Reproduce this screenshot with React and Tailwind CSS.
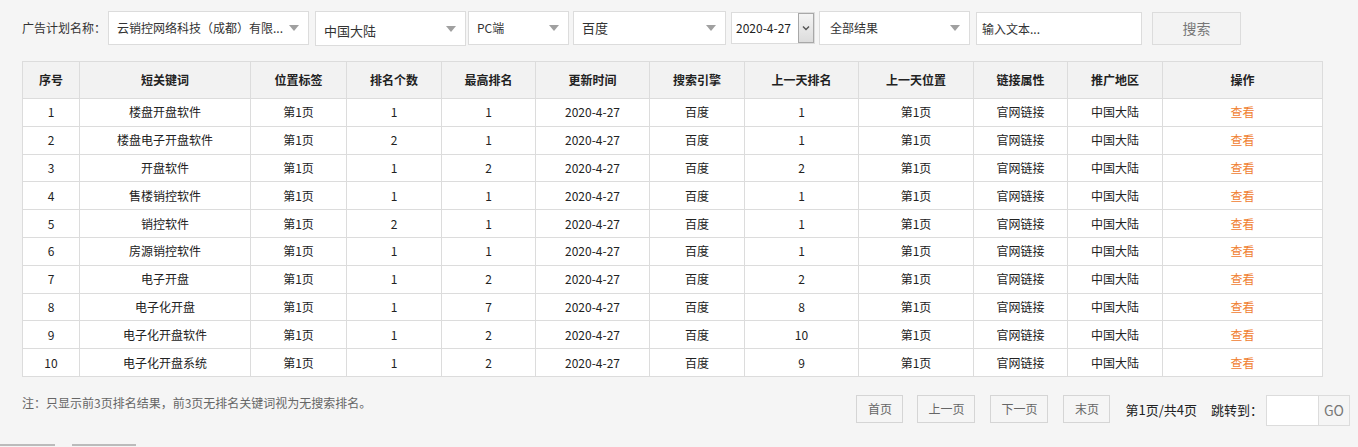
import React from "react";

const rows = [
  [1, "楼盘开盘软件", 1, 1, 1],
  [2, "楼盘电子开盘软件", 2, 1, 1],
  [3, "开盘软件", 1, 2, 2],
  [4, "售楼销控软件", 1, 1, 1],
  [5, "销控软件", 2, 1, 1],
  [6, "房源销控软件", 1, 1, 1],
  [7, "电子开盘", 1, 2, 2],
  [8, "电子化开盘", 1, 7, 8],
  [9, "电子化开盘软件", 1, 2, 10],
  [10, "电子化开盘系统", 1, 2, 9],
];

const heads = ["序号", "短关键词", "位置标签", "排名个数", "最高排名", "更新时间", "搜索引擎", "上一天排名", "上一天位置", "链接属性", "推广地区", "操作"];
const widths = [57, 171, 96, 95, 94, 114, 95, 114, 115, 94, 95, 160];

function Caret() {
  return (
    <svg width="10" height="6" viewBox="0 0 10 6" className="shrink-0">
      <path d="M0 0h10L5 6z" fill="#a0a0a0" />
    </svg>
  );
}

function Select({ text, className, textClass = "" }) {
  return (
    <div className={`h-[34px] bg-white border border-[#dcdcdc] flex items-center justify-between pl-2 pr-[9px] ${className}`}>
      <span className={`truncate text-[12px] text-[#333] ${textClass}`}>{text}</span>
      <Caret />
    </div>
  );
}

function PageBtn({ children, className = "" }) {
  return (
    <button className={`h-[28px] border border-[#d5d5d5] bg-[#f5f5f5] text-[12px] text-[#666] ${className}`}>
      {children}
    </button>
  );
}

export default function App() {
  return (
    <div
      className="w-[1358px] h-[447px] bg-[#f5f5f5] overflow-hidden text-[#333] relative"
      style={{ fontFamily: '"Noto Sans CJK SC", "Noto Sans", sans-serif' }}
    >
      <div className="flex items-center pl-[22px] pt-[11px] h-[45px]">
        <span className="text-[12px] text-[#333] w-[86px]">广告计划名称：</span>
        <Select text="云销控网络科技（成都）有限..." className="w-[201px]" />
        <Select text="中国大陆" className="w-[151px] ml-[6px] h-[35px] mt-[1px]" textClass="text-[13px] pt-[5px]" />
        <Select text="PC端" className="w-[101px] ml-[2px]" />
        <Select text="百度" className="w-[153px] ml-[4px]" textClass="text-[13px]" />
        <div className="ml-[5px] w-[84px] h-[32px] bg-white border border-[#dcdcdc] flex items-center pl-[4px]">
          <span className="text-[12px] text-[#222] flex-1">2020-4-27</span>
          <div className="w-[16px] h-[30px] border border-[#a8a8a8] bg-gradient-to-b from-[#f4f4f4] to-[#dcdcdc] flex items-center justify-center">
            <svg width="8" height="6" viewBox="0 0 8 6">
              <path d="M1 1.5l3 3 3-3" stroke="#555" strokeWidth="1.4" fill="none" />
            </svg>
          </div>
        </div>
        <Select text="全部结果" className="w-[151px] ml-[4px] pl-[10px]" />
        <div className="ml-[6px] w-[166px] h-[33px] mt-[1px] bg-white border border-[#dcdcdc] flex items-center pl-[5px]">
          <span className="text-[12px] text-[#333]">输入文本...</span>
        </div>
        <button className="ml-[10px] w-[89px] h-[33px] mt-[1px] bg-[#f3f3f3] border border-[#dcdcdc] text-[14px] text-[#777]">
          搜索
        </button>
      </div>

      <div className="pl-[22px] pt-[16px]">
        <table className="table-fixed border-collapse text-[12px] text-[#222]" style={{ width: 1300 }}>
          <colgroup>
            {widths.map((w, i) => (
              <col key={i} style={{ width: w }} />
            ))}
          </colgroup>
          <thead>
            <tr className="h-[37px] bg-[#f2f2f2]">
              {heads.map((h) => (
                <th key={h} className="border border-[#dcdcdc] font-bold text-[12px] text-[#222] text-center">
                  {h}
                </th>
              ))}
            </tr>
          </thead>
          <tbody>
            {rows.map(([n, kw, cnt, top, prev]) => (
              <tr key={n} className="h-[27.8px] bg-white text-center">
                <td className="border border-[#dcdcdc] p-0">{n}</td>
                <td className="border border-[#dcdcdc] p-0">{kw}</td>
                <td className="border border-[#dcdcdc] p-0">第1页</td>
                <td className="border border-[#dcdcdc] p-0">{cnt}</td>
                <td className="border border-[#dcdcdc] p-0">{top}</td>
                <td className="border border-[#dcdcdc] p-0">2020-4-27</td>
                <td className="border border-[#dcdcdc] p-0">百度</td>
                <td className="border border-[#dcdcdc] p-0">{prev}</td>
                <td className="border border-[#dcdcdc] p-0">第1页</td>
                <td className="border border-[#dcdcdc] p-0">官网链接</td>
                <td className="border border-[#dcdcdc] p-0">中国大陆</td>
                <td className="border border-[#dcdcdc] p-0 text-[#f0802f]">查看</td>
              </tr>
            ))}
          </tbody>
        </table>
      </div>

      <div className="flex items-start pl-[22px] pt-[16px]">
        <p className="text-[12px] text-[#666] pt-[1px]">注：只显示前3页排名结果，前3页无排名关键词视为无搜索排名。</p>
        <div className="ml-auto mr-[8px] flex items-center">
          <PageBtn className="w-[47px]">首页</PageBtn>
          <PageBtn className="w-[58px] ml-[14px]">上一页</PageBtn>
          <PageBtn className="w-[58px] ml-[15px]">下一页</PageBtn>
          <PageBtn className="w-[47px] ml-[15px]">末页</PageBtn>
          <span className="ml-[15px] text-[13px] text-[#222]">第1页/共4页</span>
          <span className="ml-[14px] text-[13px] text-[#222]">跳转到：</span>
          <div className="ml-[3px] w-[53px] h-[31px] bg-white border border-[#dcdcdc] mt-[2px]" />
          <button className="w-[31px] h-[31px] mt-[2px] border border-[#dcdcdc] border-l-0 bg-[#f5f5f5] text-[14px] text-[#777]">
            GO
          </button>
        </div>
      </div>

      <div className="absolute left-0 top-[444px] flex">
        <div className="w-[55px] h-[4px] border-t-2 border-[#bbb]" />
        <div className="w-[64px] h-[4px] ml-[17px] border-t-2 border-[#bbb]" />
      </div>
    </div>
  );
}
